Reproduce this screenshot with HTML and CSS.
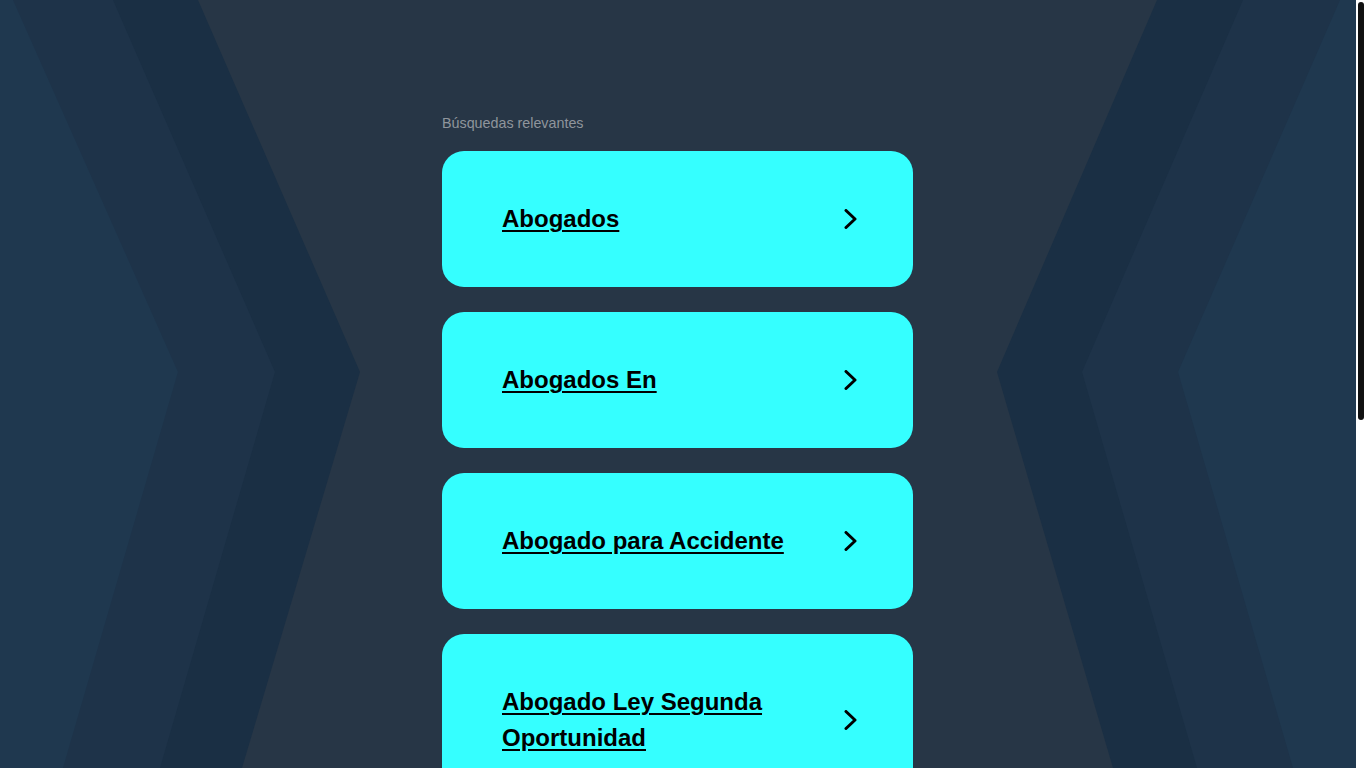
FILE: index.html
```html
<!DOCTYPE html>
<html lang="es">
<head>
  <meta charset="UTF-8">
  <meta name="viewport" content="width=device-width, initial-scale=1.0">
  <title>Búsquedas relevantes</title>
  <link rel="stylesheet" href="styles.css">
</head>
<body>
  <div class="content">
    <svg class="backdrop" viewBox="0 0 1356 768" preserveAspectRatio="none" aria-hidden="true">
      <rect width="1356" height="768" fill="#273646"/>
      <polygon points="0,0 198,0 360,372 242,768 0,768" fill="#1a2f44"/>
      <polygon points="0,0 113,0 275,372 160,768 0,768" fill="#1e3349"/>
      <polygon points="0,0 13,0 178,372 63,768 0,768" fill="#1f384f"/>
      <polygon points="1356,0 1157,0 997,372 1113,768 1356,768" fill="#1a2f44"/>
      <polygon points="1356,0 1243,0 1082,372 1197,768 1356,768" fill="#1e3349"/>
      <polygon points="1356,0 1340,0 1178,372 1293,768 1356,768" fill="#1f384f"/>
    </svg>

    <div class="related">
      <div class="related-title">Búsquedas relevantes</div>
      <div class="links">
        <a class="link-card" href="#">
          <span class="link-text">Abogados</span>
          <svg class="chevron" width="16" height="20" viewBox="0 0 16 20"><polyline points="3,1.5 12,10 3,18.5"/></svg>
        </a>
        <a class="link-card" href="#">
          <span class="link-text">Abogados En</span>
          <svg class="chevron" width="16" height="20" viewBox="0 0 16 20"><polyline points="3,1.5 12,10 3,18.5"/></svg>
        </a>
        <a class="link-card" href="#">
          <span class="link-text">Abogado para Accidente</span>
          <svg class="chevron" width="16" height="20" viewBox="0 0 16 20"><polyline points="3,1.5 12,10 3,18.5"/></svg>
        </a>
        <a class="link-card" href="#">
          <span class="link-text">Abogado Ley Segunda Oportunidad</span>
          <svg class="chevron" width="16" height="20" viewBox="0 0 16 20"><polyline points="3,1.5 12,10 3,18.5"/></svg>
        </a>
        <a class="link-card" href="#">
          <span class="link-text">Abogados de Familia</span>
          <svg class="chevron" width="16" height="20" viewBox="0 0 16 20"><polyline points="3,1.5 12,10 3,18.5"/></svg>
        </a>
      </div>
    </div>
  </div>
  <div class="scrollbar"><div class="scrollbar-thumb"></div></div>
</body>
</html>
```

FILE: styles.css
```css
html, body {
  height: 100%;
  margin: 0;
  overflow: hidden;
  background-color: #fff;
}
body {
  display: flex;
  font-family: "Liberation Sans", Arial, sans-serif;
  color: #000;
}
.content {
  position: relative;
  flex: 1;
  height: 100vh;
  overflow: hidden;
  padding: 115px 1px 0 0;
  box-sizing: border-box;
}
.backdrop {
  position: absolute;
  top: 0;
  left: 0;
  width: 100%;
  height: 100%;
}
.scrollbar {
  width: 10px;
  flex-shrink: 0;
  padding: 2px;
  box-sizing: border-box;
  background-color: #fff;
}
.scrollbar-thumb {
  height: 418px;
  background-color: #111;
  border-radius: 3px;
}
.related {
  position: relative;
  width: 471px;
  margin: 0 auto;
}
.related-title {
  font-size: 14.3px;
  line-height: 16px;
  color: #8f959c;
  margin-bottom: 20px;
}
.links {
  display: flex;
  flex-direction: column;
  gap: 25px;
}
.link-card {
  display: flex;
  align-items: center;
  justify-content: space-between;
  padding: 50px 54px 50px 60px;
  background-color: #35ffff;
  border-radius: 22px;
  color: #000;
  text-decoration: none;
}
.link-text {
  flex: 1;
  margin-right: 20px;
  font-size: 24px;
  font-weight: bold;
  line-height: 36px;
  text-decoration: underline;
  text-decoration-thickness: 2px;
  text-underline-offset: 3px;
}
.chevron {
  flex-shrink: 0;
  fill: none;
  stroke: #000;
  stroke-width: 3;
  stroke-linecap: round;
  stroke-linejoin: round;
}
```
